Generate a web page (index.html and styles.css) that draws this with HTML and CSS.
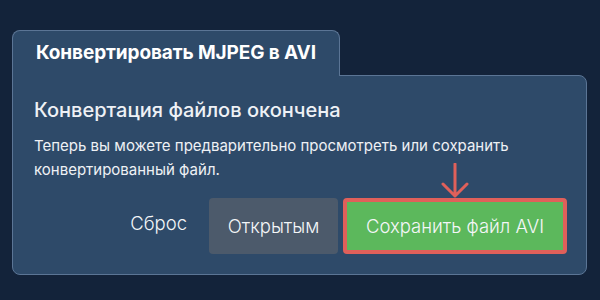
FILE: index.html
```
<!DOCTYPE html>
<html lang="ru">
<head>
    <meta charset="UTF-8">
    <title>Конвертировать MJPEG в AVI</title>
    <link rel="stylesheet" href="styles.css">
</head>
<body>
<div class="converter">
    <div class="tab">Конвертировать MJPEG в AVI</div>
    <div class="panel">
        <h2>Конвертация файлов окончена</h2>
        <p>Теперь вы можете предварительно просмотреть или сохранить конвертированный файл.</p>
        <div class="actions">
            <a href="#" class="reset">Сброс</a>
            <a href="#" class="btn btn-open">Открытым</a>
            <a href="#" class="btn btn-save">
                Сохранить файл AVI
                <svg class="arrow" width="30" height="36" viewBox="0 0 30 36">
                    <path d="M15 1 V33 M3 21 L15 33 L27 21" fill="none" stroke="#e0605a" stroke-width="3" stroke-linecap="round" stroke-linejoin="round"/>
                </svg>
            </a>
        </div>
    </div>
</div>
</body>
</html>
```
FILE: styles.css
```
body {
    margin: 0;
    background-color: #13233a;
    font-family: Inter, "Noto Sans", sans-serif;
    color: #f2f4f7;
}
.converter {
    padding: 30px 13px 26px 12px;
}
.tab {
    display: inline-block;
    position: relative;
    z-index: 1;
    margin-bottom: -1px;
    padding: 10px 23px 12px 23px;
    background-color: #2e4a69;
    border: 1px solid #5b7595;
    border-bottom: none;
    border-radius: 8px 8px 0 0;
    font-size: 19px;
    font-weight: 700;
    letter-spacing: -0.1px;
    color: #ffffff;
}
.panel {
    background-color: #2e4a69;
    border: 1px solid #5b7595;
    border-radius: 0 8px 8px 8px;
    padding: 22px 19px 20px 21px;
}
h2 {
    margin: 0 0 12px 0;
    font-size: 20px;
    font-weight: 500;
    color: #eef1f5;
}
p {
    margin: 0;
    font-size: 15px;
    line-height: 24px;
    color: #eef1f5;
}
.actions {
    display: flex;
    justify-content: flex-end;
    align-items: center;
    margin-top: 16px;
}
.actions a {
    text-decoration: none;
    color: #f4f6f8;
    font-size: 18.5px;
    font-weight: 300;
}
.reset {
    margin-right: 22px;
    margin-top: -6px;
}
.btn {
    display: flex;
    align-items: center;
    justify-content: center;
    height: 56px;
    box-sizing: border-box;
    border-radius: 4px;
}
.btn-open {
    width: 129px;
    background-color: #4c5a6b;
    margin-right: 5px;
}
.btn-save {
    position: relative;
    width: 224px;
    background-color: #5cb85c;
    border: 4px solid #e0605a;
}
.arrow {
    position: absolute;
    left: 93px;
    bottom: 100%;
    margin-bottom: 3px;
}
```
